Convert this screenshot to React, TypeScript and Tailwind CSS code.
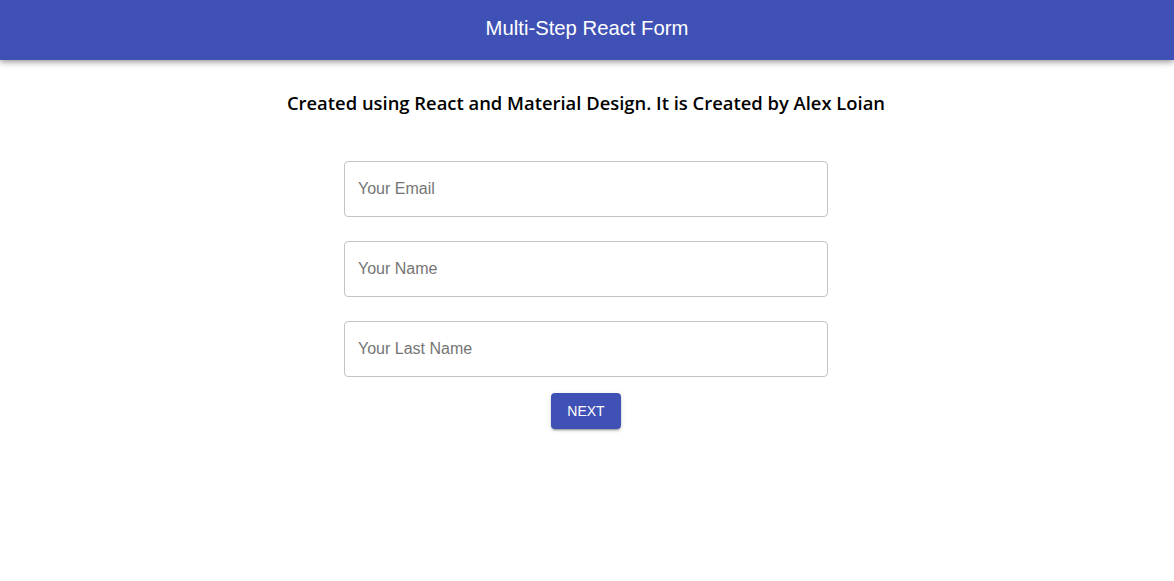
export default function App() {
  return (
    <div className="min-h-[581px] bg-white font-['Liberation_Sans',Arial,sans-serif]">
      <header className="flex h-[60px] items-center justify-center bg-[#3f51b5] pb-[4px] shadow-[0_2px_4px_-1px_rgba(0,0,0,0.2),0_4px_5px_0_rgba(0,0,0,0.14),0_1px_10px_0_rgba(0,0,0,0.12)]">
        <h1 className="text-[20.3px] leading-none text-white">Multi-Step React Form</h1>
      </header>
      <main className="flex flex-col items-center pr-[2px]">
        <h2 className="mt-[31px] font-['Open_Sans',sans-serif] text-[18.4px] font-semibold leading-[24px] text-black">
          Created using React and Material Design. It is Created by Alex Loian
        </h2>
        <form className="mt-[46px] flex w-[484px] flex-col gap-[24px]">
          {["Your Email", "Your Name", "Your Last Name"].map((p) => (
            <input
              key={p}
              placeholder={p}
              className="h-[56px] w-full rounded-[4px] border border-[#c4c4c4] px-[13px] text-[16px] text-black outline-none placeholder:text-[#757575]"
            />
          ))}
        </form>
        <button
          type="button"
          className="mt-[16px] h-[36px] w-[70px] rounded-[4px] bg-[#3f51b5] text-[14px] uppercase text-white shadow-[0_3px_1px_-2px_rgba(0,0,0,0.2),0_2px_2px_0_rgba(0,0,0,0.14),0_1px_5px_0_rgba(0,0,0,0.12)]"
        >
          Next
        </button>
      </main>
    </div>
  );
}
